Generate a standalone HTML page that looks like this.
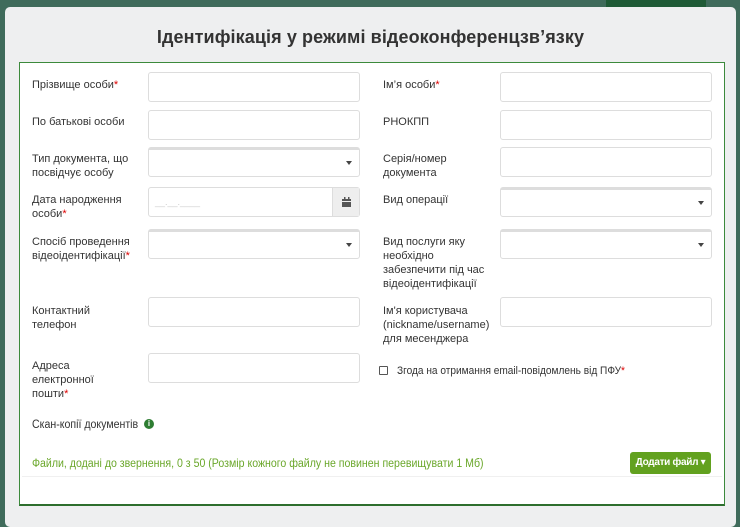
<!DOCTYPE html><html><head><meta charset="utf-8"><style>
*{box-sizing:border-box;margin:0;padding:0}
body{width:740px;height:512px;overflow:hidden;background:#3f6b5b;font-family:"Liberation Sans","DejaVu Sans",sans-serif;position:relative}
.modal{position:absolute;left:5px;top:7px;width:731px;height:520px;background:#eeeff0;border-radius:5px}
h1{position:absolute;left:0;right:0;top:20px;text-align:center;font-size:18px;font-weight:bold;color:#333;letter-spacing:.1px}
.panel{position:absolute;left:19px;top:62px;width:706px;height:444px;background:#fff;border:1px solid #3c8a3c;border-bottom:2px solid #2d6e2d}
.l{position:absolute;font-size:11px;color:#333;line-height:14px}
.r{color:#d00}
.i{position:absolute;width:212px;height:30px;border:1px solid #ddd;border-radius:3px;background:#fff}
.s{border-top:3px solid #ddd}
.s:after{content:"";position:absolute;right:7px;top:11px;border:3px solid transparent;border-top:4px solid #444}
.d .btn{position:absolute;right:0;top:0;width:27px;height:28px;background:#eee;border-left:1px solid #ddd}
.d .ph{position:absolute;left:6px;top:16px;color:#ccc;font-size:9px;top:9px}
.n{transform:scaleX(.92);transform-origin:0 0;white-space:nowrap}
</style></head><body>
<div class="modal"><h1>Ідентифікація у режимі відеоконференцзв’язку</h1></div>
<div style="position:absolute;left:606px;top:0;width:100px;height:7px;background:#1f5a36"></div>
<div class="panel"></div>
<div class="l" style="left:32px;top:78px">Прізвище особи<span class="r">*</span></div>
<div class="i" style="left:148px;top:72px"></div>
<div class="l" style="left:383px;top:78px">Ім’я особи<span class="r">*</span></div>
<div class="i" style="left:500px;top:72px"></div>
<div class="l" style="left:32px;top:115px">По батькові особи</div>
<div class="i" style="left:148px;top:110px"></div>
<div class="l" style="left:383px;top:115px">РНОКПП</div>
<div class="i" style="left:500px;top:110px"></div>
<div class="l" style="left:32px;top:152px">Тип документа, що<br>посвідчує особу</div>
<div class="i s" style="left:148px;top:147px"></div>
<div class="l" style="left:383px;top:152px">Серія/номер<br>документа</div>
<div class="i" style="left:500px;top:147px"></div>
<div class="l" style="left:32px;top:193px">Дата народження<br>особи<span class="r">*</span></div>
<div class="i d" style="left:148px;top:187px"><div class="ph">__.__.____</div><div class="btn"><svg width="27" height="28"><rect x="9" y="11" width="9" height="8" fill="#555"/><rect x="9" y="13" width="9" height="1" fill="#eee"/><rect x="11" y="9" width="1.5" height="2" fill="#555"/><rect x="15" y="9" width="1.5" height="2" fill="#555"/></svg></div></div>
<div class="l" style="left:383px;top:193px">Вид операції</div>
<div class="i s" style="left:500px;top:187px"></div>
<div class="l" style="left:32px;top:235px">Спосіб проведення<br>відеоідентифікації<span class="r">*</span></div>
<div class="i s" style="left:148px;top:229px"></div>
<div class="l" style="left:383px;top:235px">Вид послуги яку<br>необхідно<br>забезпечити під час<br>відеоідентифікації</div>
<div class="i s" style="left:500px;top:229px"></div>
<div class="l" style="left:32px;top:304px">Контактний<br>телефон</div>
<div class="i" style="left:148px;top:297px"></div>
<div class="l" style="left:383px;top:304px">Ім'я користувача<br>(nickname/username)<br>для месенджера</div>
<div class="i" style="left:500px;top:297px"></div>
<div class="l" style="left:32px;top:359px">Адреса<br>електронної<br>пошти<span class="r">*</span></div>
<div class="i" style="left:148px;top:353px"></div>
<div style="position:absolute;left:379px;top:366px;width:9px;height:9px;border:1px solid #555;border-radius:1px"></div>
<div class="l n" style="left:397px;top:364px">Згода на отримання email-повідомлень від ПФУ<span class="r">*</span></div>
<div class="l n" style="left:32px;top:418px;font-size:11.5px">Скан-копії документів</div>
<div style="position:absolute;left:144px;top:419px;width:10px;height:10px;border-radius:50%;background:#2e7d32;color:#fff;font-size:8px;font-weight:bold;text-align:center;line-height:10px">i</div>
<div class="l n" style="left:32px;top:457px;color:#6aa72a;font-size:11.5px">Файли, додані до звернення, 0 з 50 (Розмір кожного файлу не повинен перевищувати 1 Мб)</div>
<div style="position:absolute;left:630px;top:452px;width:81px;height:22px;background:#62a11f;border-radius:3px;color:#fff;font-size:10px;font-weight:bold;text-align:center;line-height:22px;letter-spacing:-.3px">Додати файл ▾</div>
<div style="position:absolute;left:22px;top:476px;width:700px;border-top:1px solid #f0f0f0"></div>
</body></html>
